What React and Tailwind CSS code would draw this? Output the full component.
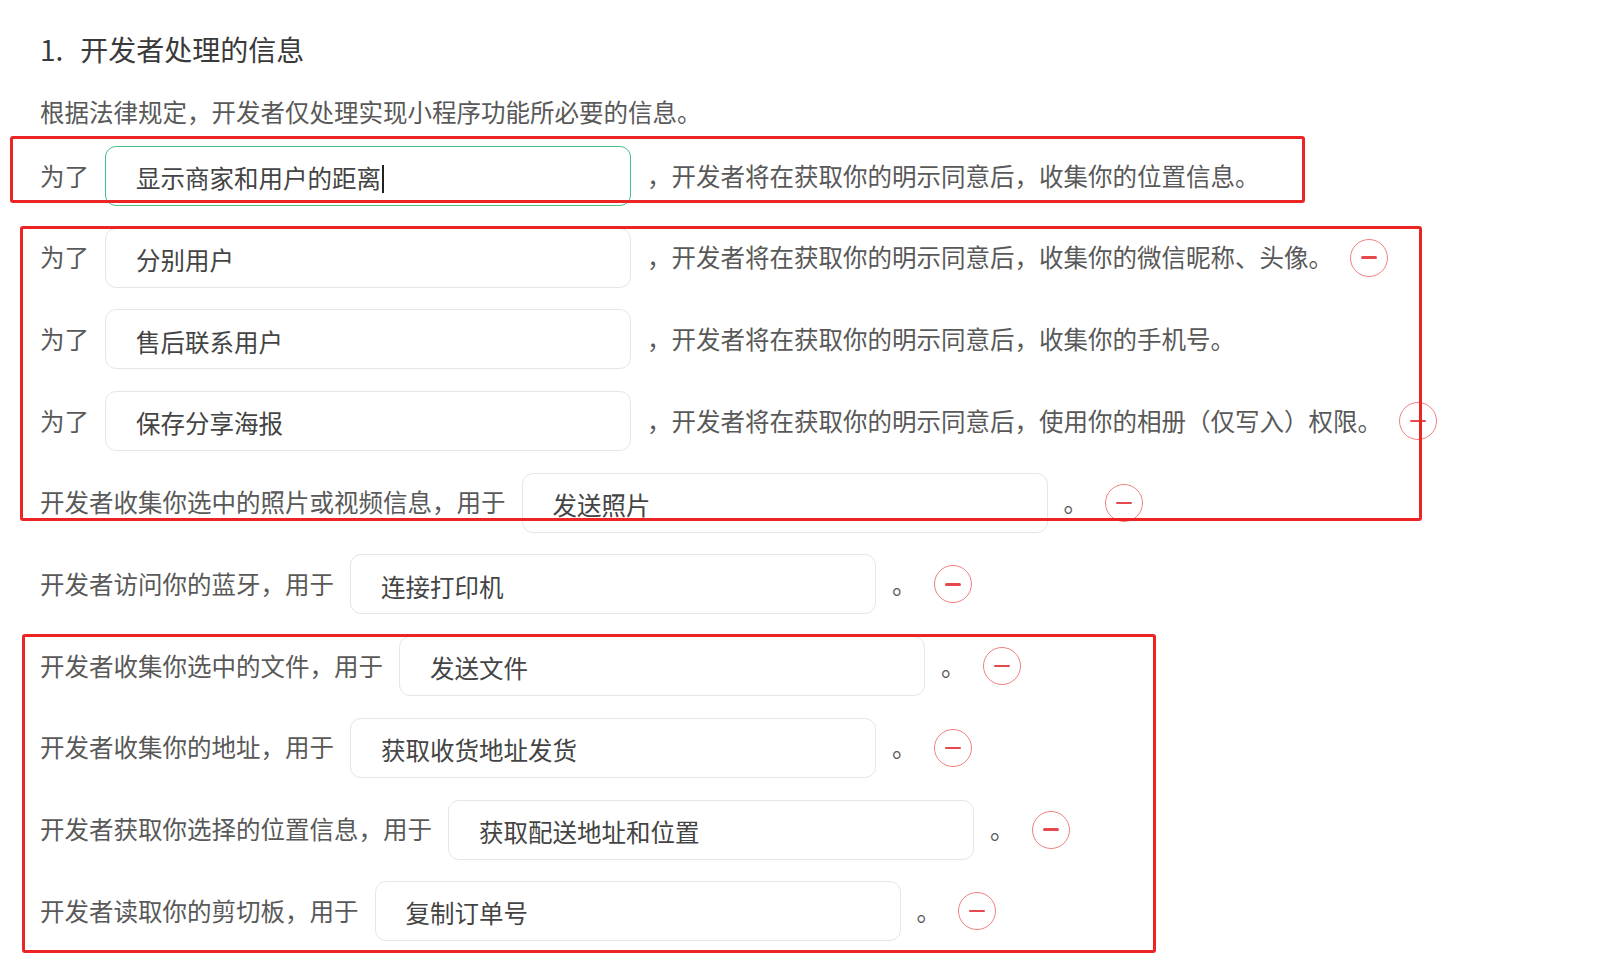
const rows = [
  { label: '为了', value: '显示商家和用户的距离', tail: '，开发者将在获取你的明示同意后，收集你的位置信息。', active: true },
  { label: '为了', value: '分别用户', tail: '，开发者将在获取你的明示同意后，收集你的微信昵称、头像。', remove: true },
  { label: '为了', value: '售后联系用户', tail: '，开发者将在获取你的明示同意后，收集你的手机号。' },
  { label: '为了', value: '保存分享海报', tail: '，开发者将在获取你的明示同意后，使用你的相册（仅写入）权限。', remove: true },
  { label: '开发者收集你选中的照片或视频信息，用于', value: '发送照片', tail: '。', remove: true },
  { label: '开发者访问你的蓝牙，用于', value: '连接打印机', tail: '。', remove: true },
  { label: '开发者收集你选中的文件，用于', value: '发送文件', tail: '。', remove: true },
  { label: '开发者收集你的地址，用于', value: '获取收货地址发货', tail: '。', remove: true },
  { label: '开发者获取你选择的位置信息，用于', value: '获取配送地址和位置', tail: '。', remove: true },
  { label: '开发者读取你的剪切板，用于', value: '复制订单号', tail: '。', remove: true },
];

const RemoveButton = () => (
  <div className="ml-[17px] w-[38px] h-[38px] shrink-0 rounded-full border-[1.5px] border-[#f08080] flex items-center justify-center">
    <div className="w-[16px] h-[2.5px] rounded-full bg-[#e5484d]" />
  </div>
);

const Row = ({ label, value, tail, active, remove }) => (
  <div className="flex items-center h-[60px] whitespace-nowrap">
    <span className="text-[#595959]">{label}</span>
    <div
      className={`ml-4 w-[526px] h-[60px] shrink-0 rounded-[11px] border pl-[30px] pt-[5px] flex items-center text-[#444] ${
        active ? 'border-[#45c183]' : 'border-[#e6e6e6]'
      }`}
    >
      {value}
      {active && <span className="inline-block w-[2px] h-[28px] bg-[#222] ml-[1px]" />}
    </div>
    <span className="ml-4 text-[#595959]">{tail}</span>
    {remove && <RemoveButton />}
  </div>
);

export default function App() {
  return (
    <div
      className="relative min-h-screen bg-white pl-10 pt-[29px] text-[24.5px]"
      style={{ fontFamily: '"Noto Sans CJK SC", "Noto Sans", sans-serif' }}
    >
      <h2 className="text-[28px] leading-[40px] text-[#3a3a3a]">
        <span>1.</span>
        <span className="ml-[17px]">开发者处理的信息</span>
      </h2>
      <p className="mt-[27px] leading-[32px] text-[#595959]">根据法律规定，开发者仅处理实现小程序功能所必要的信息。</p>

      <div className="mt-[18px] flex flex-col gap-[21.7px]">
        {rows.map((r, i) => (
          <Row key={i} {...r} />
        ))}
      </div>

      {/* annotation boxes drawn over the form */}
      <div className="absolute left-[10px] top-[136px] w-[1295px] h-[67px] border-[3.5px] border-[#ec2424] rounded-[3px] pointer-events-none" />
      <div className="absolute left-[20px] top-[226px] w-[1402px] h-[295px] border-[3.5px] border-[#ec2424] rounded-[3px] pointer-events-none" />
      <div className="absolute left-[22px] top-[634px] w-[1134px] h-[319px] border-[3.5px] border-[#ec2424] rounded-[3px] pointer-events-none" />
    </div>
  );
}
